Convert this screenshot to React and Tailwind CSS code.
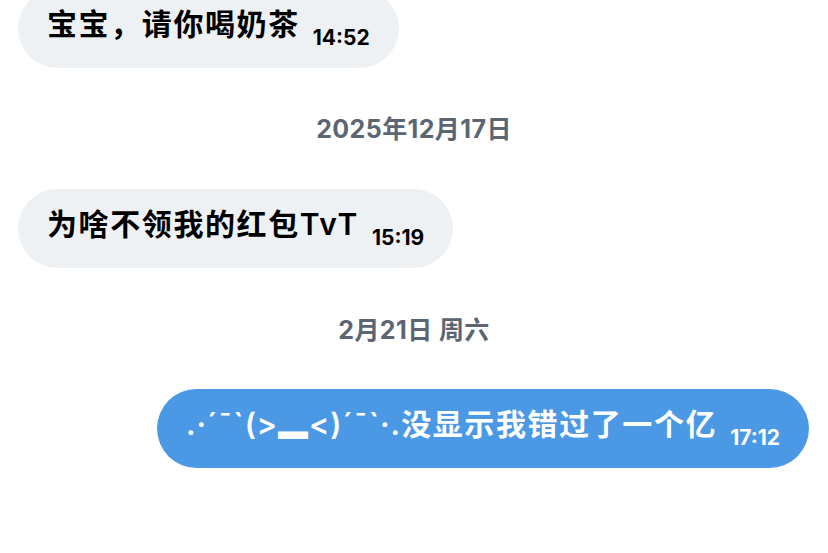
import React from 'react';

const FONT = "font-['Inter','Noto_Sans_CJK_SC',sans-serif]";

const Bubble = ({ prefix, text, time, mine }) => (
  <div className={`flex ${mine ? 'justify-end pr-[19px]' : 'pl-[18px]'}`}>
    <div
      className={`h-[79px] flex items-center rounded-full pl-[29px] pr-[29px] pt-[4px] ${
        mine ? 'bg-[#4b98e5] text-white' : 'bg-[#eef1f3] text-black'
      }`}
    >
      <span className="text-[30px] font-semibold leading-[36px] tracking-[1.6px] whitespace-nowrap">
        {prefix && <span className="tracking-[1px]">{prefix}</span>}
        {text}
        <span className="ml-[13px] text-[21px] font-bold tracking-normal align-[-10px]">{time}</span>
      </span>
    </div>
  </div>
);

const DateLabel = ({ children }) => (
  <div className="flex justify-center text-[25px] font-bold tracking-[0.4px] text-[#5b6672] leading-[30px]">
    {children}
  </div>
);

const App = () => {
  return (
    <div className={`w-[828px] h-[553px] bg-white overflow-hidden ${FONT}`}>
      <div className="mt-[-11px]">
        <Bubble text="宝宝，请你喝奶茶" time="14:52" />
      </div>
      <div className="mt-[46px]">
        <DateLabel>2025年12月17日</DateLabel>
      </div>
      <div className="mt-[45px]">
        <Bubble text="为啥不领我的红包TvT" time="15:19" />
      </div>
      <div className="mt-[47px]">
        <DateLabel>2月21日 周六</DateLabel>
      </div>
      <div className="mt-[44px]">
        <Bubble mine prefix=".·´¯`(>▂<)´¯`·." text="没显示我错过了一个亿" time="17:12" />
      </div>
    </div>
  );
};

export default App;
